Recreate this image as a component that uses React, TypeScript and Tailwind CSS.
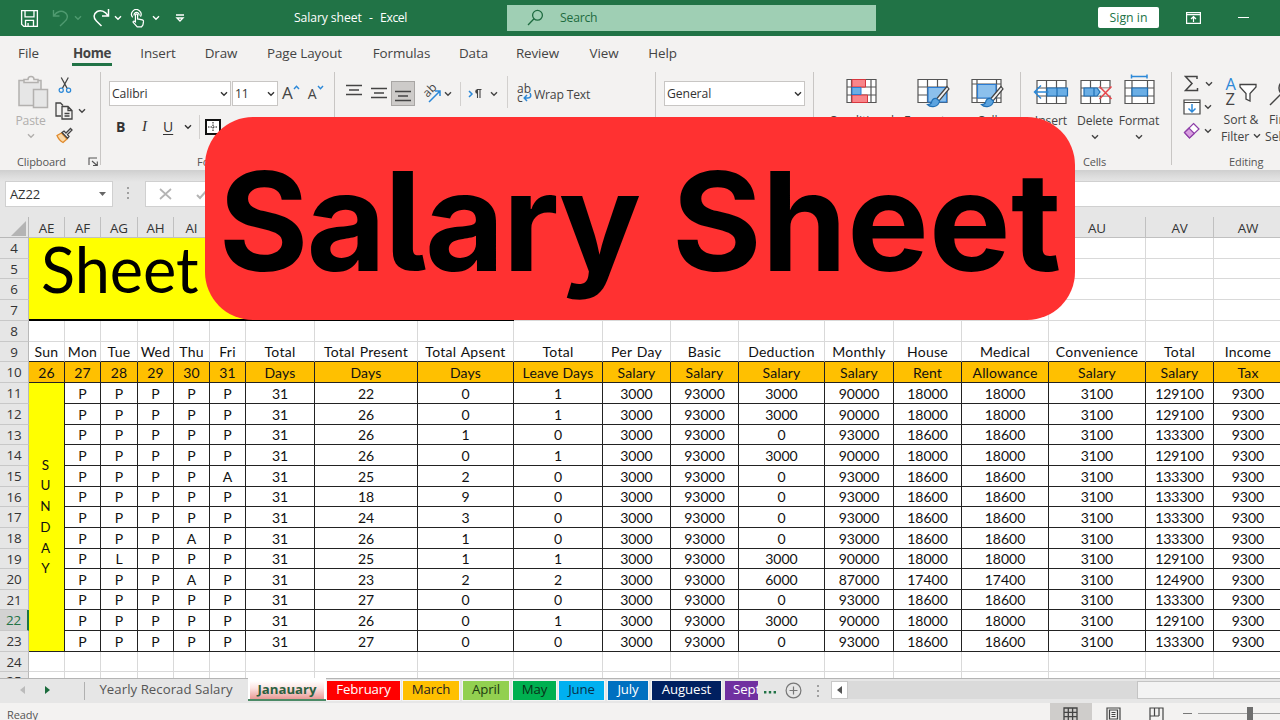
import type { ReactNode } from "react";

const ROW_H =
  "grid-rows-[21px_20px_21px_21px_21px_20px_21px_21px_21px_20px_21px_21px_20px_21px_21px_20px_21px_20px_21px_21px_20px_7px]";
const COLS =
  "grid-cols-[29px_36px_36px_37px_36px_36px_36px_69px_103px_96px_89px_68px_68px_86px_69px_68px_87px_97px_68px_69px]";

const LETTERS = ["AE", "AF", "AG", "AH", "AI", "AJ", "AK", "AL", "AM", "AN", "AO", "AP", "AQ", "AR", "AS", "AT", "AU", "AV", "AW"];
const HEAD1 = ["Sun", "Mon", "Tue", "Wed", "Thu", "Fri", "Total", "Total Present", "Total Apsent", "Total", "Per Day", "Basic", "Deduction", "Monthly", "House", "Medical", "Convenience", "Total", "Income"];
const HEAD2 = ["26", "27", "28", "29", "30", "31", "Days", "Days", "Days", "Leave Days", "Salary", "Salary", "Salary", "Salary", "Rent", "Allowance", "Salary", "Salary", "Tax"];

// attendance marks, present, absent, leave, deduction
const STAFF: [string, number, number, number, number][] = [
  ["PPPPP", 22, 0, 1, 3000],
  ["PPPPP", 26, 0, 1, 3000],
  ["PPPPP", 26, 1, 0, 0],
  ["PPPPP", 26, 0, 1, 3000],
  ["PPPPA", 25, 2, 0, 0],
  ["PPPPP", 18, 9, 0, 0],
  ["PPPPP", 24, 3, 0, 0],
  ["PPPAP", 26, 1, 0, 0],
  ["PLPPP", 25, 1, 1, 3000],
  ["PPPAP", 23, 2, 2, 6000],
  ["PPPPP", 27, 0, 0, 0],
  ["PPPPP", 26, 0, 1, 3000],
  ["PPPPP", 27, 0, 0, 0],
];

function staffCells([marks, present, absent, leave, deduction]: (typeof STAFF)[number]) {
  const monthly = 93000 - deduction;
  const allowance = monthly / 5;
  return [...marks.split(""), 31, present, absent, leave, 3000, 93000, deduction, monthly, allowance, allowance, 3100, monthly + allowance * 2 + 3100, 9300];
}

function Chevron({ className = "" }: { className?: string }) {
  return (
    <svg viewBox="0 0 8 6" className={`h-[6px] w-[8px] shrink-0 ${className}`} fill="none" stroke="currentColor" strokeWidth="1.4">
      <path d="M1 1.3 4 4.3 7 1.3" />
    </svg>
  );
}

function TitleBar() {
  return (
    <header className="flex h-9 items-center bg-[#217346] text-white">
      <svg className="mt-[2px] ml-[20px] h-[19px] w-[19px] shrink-0" viewBox="0 0 20 20" fill="none" stroke="#fff" strokeWidth="1.4">
        <path d="M1.7 1.7h16.6v16.6H4L1.7 16zM5.3 2v6.3h9.4V2M5.8 18v-6h8.4v6M8.5 18v-3.2" />
      </svg>
      <svg className="ml-[13px] h-[20px] w-[18px] shrink-0" viewBox="0 0 18 20" fill="none" stroke="#4f9a70" strokeWidth="1.4">
        <path d="M1.5 2v6h6M1.8 7.8C5 3 9.500 2.400 12.700 4.300c3.800 2.500 3.500 7-.5 9.700L8 18" />
      </svg>
      <Chevron className="ml-[4px] text-[#4f9a70]" />
      <svg className="ml-[10px] h-[20px] w-[18px] shrink-0" viewBox="0 0 18 20" fill="none" stroke="#fff" strokeWidth="1.5">
        <path d="M16.500 1v7h-6.500M16.200 7.800C13 3 8.500 1.600 5.200 3.500c-4 2.400-4 6.500-.8 9.500L9.500 18" />
      </svg>
      <Chevron className="ml-[4px]" />
      <svg className="mt-[2px] ml-[8px] h-[19px] w-[16px] shrink-0" viewBox="0 0 16 20" fill="none" stroke="#fff" strokeWidth="1.3">
        <path d="M2.400 8.800A5 5 0 1 1 10.600 8M4 6.800a2.600 2.600 0 1 1 5 0" />
        <path d="M5.300 13V6.300c0-1.500 2.300-1.500 2.300 0v4.200l5 1c1 .3 1.300.9 1.200 1.800l-.6 3.500-1.500 2H7.200L3 14.200c-.8-1.200.7-2.200 2.300-.7z" />
      </svg>
      <Chevron className="ml-[6px]" />
      <svg className="ml-[15px] h-[8px] w-[10px] shrink-0" viewBox="0 0 10 8" fill="none" stroke="#fff" strokeWidth="1.3">
        <path d="M1 1h8M2 4l3 3 3-3z" />
      </svg>
      <div className="ml-[109px] flex w-[113px] justify-between text-[12.2px] leading-none whitespace-nowrap">
        <span className="tracking-[-0.1px]">Salary sheet</span>
        <span>-</span>
        <span className="tracking-[-0.4px]">Excel</span>
      </div>
      <div className="ml-[100px] flex h-[26px] w-[369px] items-center bg-[#9fcfb4] text-[#1e6b40]">
        <svg className="ml-[20px] h-[17px] w-[17px]" viewBox="0 0 17 17" fill="none" stroke="currentColor" strokeWidth="1.3">
          <circle cx="10.500" cy="6.300" r="4.900" />
          <path d="M7 9.800 1 16" />
        </svg>
        <span className="ml-[16px] text-[12.2px] leading-none tracking-[-0.2px]">Search</span>
      </div>
      <div className="ml-[222px] flex h-[21px] w-[61px] items-center justify-center rounded-[2px] bg-white text-[12.3px] leading-none whitespace-nowrap text-[#217346]">
        Sign in
      </div>
      <svg className="ml-[27px] h-[12px] w-[15px]" viewBox="0 0 15 12" fill="none" stroke="#fff" strokeWidth="1.200">
        <path d="M.6.6h13.800v10.800H.6zM.6 2.600h13.800M7.500 10V4.800M5 7l2.500-2.500L10 7" />
      </svg>
      <div className="ml-[37px] h-px w-[11px] bg-white" />
    </header>
  );
}

function Tab({ className, children }: { className: string; children: ReactNode }) {
  return <span className={`flex shrink-0 justify-center whitespace-nowrap ${className}`}>{children}</span>;
}

function MenuTabs() {
  return (
    <nav className="flex h-9 items-start pt-[9px] text-[13.4px] leading-[17px] tracking-[-0.1px] text-[#444]">
      <Tab className="ml-[18px] w-[21px]">File</Tab>
      <Tab className="ml-[33px] h-[21px] w-[40px] border-b-[3px] border-[#217346] font-bold tracking-[-0.4px]">Home</Tab>
      <Tab className="ml-[29px] w-[34px]">Insert</Tab>
      <Tab className="ml-[30px] w-[32px]">Draw</Tab>
      <Tab className="ml-[30px] w-[75px]">Page Layout</Tab>
      <Tab className="ml-[31px] w-[57px]">Formulas</Tab>
      <Tab className="ml-[29px] w-[29px]">Data</Tab>
      <Tab className="ml-[28px] w-[43px]">Review</Tab>
      <Tab className="ml-[29px] w-[32px]">View</Tab>
      <Tab className="ml-[28px] w-[29px]">Help</Tab>
    </nav>
  );
}

function Group({ className, label, children }: { className: string; label?: string; children: ReactNode }) {
  return (
    <section className={`relative flex h-[98px] shrink-0 flex-col ${className}`}>
      <div className="h-[83px]">{children}</div>
      <div className="pr-[4px] text-center text-[11px] leading-[14px] tracking-[-0.2px] text-[#555]">{label}</div>
      <div className="absolute top-0 right-0 h-[93px] w-px bg-[#c8c6c4]" />
    </section>
  );
}

function ClipboardGroup() {
  return (
    <section className="relative flex h-[98px] w-[101px] shrink-0 flex-col">
      <div className="flex h-[83px]">
        <div className="ml-[12px] flex w-[37px] flex-col items-center pt-[3px] text-[#b1afad]">
          <svg className="ml-[5px] h-[34px] w-[32px] shrink-0" viewBox="0 0 32 34" fill="#e6e6e6" stroke="#b3b1af" strokeWidth="1.5">
            <path d="M2 5.500h22v25H2z" />
            <path d="M7 7.500h14V4.500h-4c0-4-6-4-6 0H7z" fill="#f3f2f1" />
            <path d="M16.500 14.500h14v18h-14z" />
          </svg>
          <span className="mt-[3px] text-[12.2px] leading-[17px] tracking-[-0.2px]">Paste</span>
          <Chevron className="mt-[4px]" />
        </div>
        <div className="ml-[6px] flex flex-col">
          <svg className="mt-[5px] ml-[3px] h-[17px] w-[14px]" viewBox="0 0 14 18" fill="none" strokeWidth="1.300">
            <path d="M3 .5 9.300 12M10.500.5 4.200 12" stroke="#444" />
            <circle cx="3" cy="14" r="2.200" stroke="#2b88d8" />
            <circle cx="10.800" cy="14" r="2.200" stroke="#2b88d8" />
          </svg>
          <div className="mt-[8px] flex items-center">
            <svg className="h-[18px] w-[18px]" viewBox="0 0 18 18" fill="none" stroke="#444" strokeWidth="1.300">
              <path d="M6 14H1V1h4.500L8 3.500" />
              <path d="M7 4.500h6l4 4V17H7zM13 4.500v4h4M9.500 11.500h5M9.500 14h5" />
            </svg>
            <Chevron className="ml-[5px] text-[#444]" />
          </div>
          <svg className="mt-[7px] ml-[1px] h-[17px] w-[17px]" viewBox="0 0 17 17" fill="none" strokeWidth="1.300">
            <path d="M5.500 6 11 12l-4 3.500C4 14 2 11 1 8.500z" fill="#fbd9a8" stroke="#e08a2c" />
            <path d="m6 5.500 2-1.500 2 2 4.500-4.500 1.500 1.500L11.500 7.500l1.500 2-1.500 1.800z" stroke="#444" />
          </svg>
        </div>
      </div>
      <div className="flex items-center text-[11px] leading-[14px] text-[#555]">
        <span className="ml-[17px] w-[49px] text-center tracking-[-0.1px]">Clipboard</span>
        <svg className="ml-[22px] h-[9px] w-[10px]" viewBox="0 0 10 9" fill="none" stroke="#555" strokeWidth="1.100">
          <path d="M1 8V1h8M4 4l5 4.500M9.300 4.500v4H5" />
        </svg>
      </div>
      <div className="absolute top-0 right-0 h-[93px] w-px bg-[#c8c6c4]" />
    </section>
  );
}

function Select({ className, children }: { className: string; children: ReactNode }) {
  return (
    <div className={`flex h-[25px] shrink-0 items-center justify-between border border-[#c8c6c4] bg-white pt-[2px] pr-[2px] pl-[2px] text-[12.2px] leading-none tracking-[-0.1px] text-[#333] ${className}`}>
      {children}
      <Chevron />
    </div>
  );
}

function FontGroup() {
  return (
    <Group className="w-[234px]">
      <div className="flex items-center pt-[9px] text-[#444]">
        <Select className="ml-[8px] w-[122px]">Calibri</Select>
        <Select className="ml-[1px] w-[46px]">11</Select>
        <span className="ml-[4px] text-[17px] leading-[22px]">A</span>
        <svg className="mb-[12px] h-[5px] w-[7px]" viewBox="0 0 7 5" fill="none" stroke="#2b88d8" strokeWidth="1.400">
          <path d="M1 4 3.500 1.200 6 4" />
        </svg>
        <span className="ml-[8px] pt-[1px] text-[14px] leading-[18px]">A</span>
        <svg className="mb-[12px] h-[5px] w-[7px]" viewBox="0 0 7 5" fill="none" stroke="#2b88d8" strokeWidth="1.400">
          <path d="M1 1 3.500 3.800 6 1" />
        </svg>
      </div>
      <div className="flex h-[42px] items-center text-[14px] leading-none text-[#333]">
        <span className="ml-[15px] w-[10px] font-bold">B</span>
        <span className="ml-[16px] w-[8px] font-['Liberation_Serif',serif] text-[15px] italic">I</span>
        <span className="ml-[13px] w-[11px] underline underline-offset-2">U</span>
        <Chevron className="ml-[10px]" />
        <div className="ml-[7px] h-[24px] w-px bg-[#d2d0ce]" />
        <svg className="ml-[5px] h-[16px] w-[16px]" viewBox="0 0 16 16" fill="#fff" stroke="#111">
          <path d="M1 1h14v14H1z" strokeWidth="2" />
          <path d="M8 3v10M3 8h10" strokeDasharray="1.500 1" />
        </svg>
      </div>
      <div className="mt-[7px] ml-[96px] text-[11px] leading-[14px] text-[#555]">Font</div>
    </Group>
  );
}

function AlignGroup() {
  return (
    <Group className="w-[321px]">
      <div className="flex h-[34px] items-center pt-[10px] text-[#444]">
        <svg className="mb-[7px] ml-[11px] h-[12px] w-[16px]" viewBox="0 0 16 12" stroke="#444" strokeWidth="1.300">
          <path d="M0 1.500h16M3 6h10M0 10.500h16" />
        </svg>
        <svg className="mb-[1px] ml-[9px] h-[12px] w-[16px]" viewBox="0 0 16 12" stroke="#444" strokeWidth="1.300">
          <path d="M0 1.500h16M3 6h10M0 10.500h16" />
        </svg>
        <div className="ml-[4px] flex h-[25px] w-[24px] items-end justify-center border border-[#a8a6a4] bg-[#cdcbc9] pb-[3px]">
          <svg className="h-[12px] w-[16px]" viewBox="0 0 16 12" stroke="#444" strokeWidth="1.300">
            <path d="M0 1.500h16M3 6h10M0 10.500h16" />
          </svg>
        </div>
        <svg className="ml-[8px] h-[18px] w-[18px] overflow-visible" viewBox="0 0 18 18" fill="none" strokeWidth="1.300">
          <text x="0" y="0" fill="#444" fontSize="12" transform="translate(4.500 13) rotate(-45)">ab</text>
          <path d="M6 17 16.500 6.500M12 6h5v5" stroke="#2b88d8" strokeWidth="1.500" />
        </svg>
        <Chevron className="ml-[3px]" />
        <div className="ml-[8px] h-[24px] w-px bg-[#d2d0ce]" />
        <svg className="ml-[7px] h-[12px] w-[14px]" viewBox="0 0 14 12" fill="none" strokeWidth="1.500">
          <path d="m1 3 3 3-3 3" stroke="#2b88d8" />
          <path d="M9.500 10V1.500M12 10V1.500M13.500 1.500H9" stroke="#444" strokeWidth="1.100" />
          <path d="M9.500 1.200a2.300 2.300 0 0 0 0 4.600z" fill="#444" />
        </svg>
        <Chevron className="ml-[8px]" />
        <div className="mt-[-4px] ml-[9px] h-[32px] w-px bg-[#d2d0ce]" />
        <div className="relative ml-[9px] h-[18px] w-[15px] text-[12px] leading-[9px]">
          <div className="-mt-px">ab</div>
          <div>c</div>
          <svg className="absolute right-0 bottom-[1px] h-[9px] w-[9px]" viewBox="0 0 9 9" fill="none" stroke="#2b88d8" strokeWidth="1.500">
            <path d="M7 0c1.500 3 .5 5-2 5H1.500M4 2 1.200 5 4 8" />
          </svg>
        </div>
        <span className="mt-[2px] ml-[2px] text-[12.2px] leading-none tracking-[-0.2px] whitespace-nowrap">Wrap Text</span>
      </div>
    </Group>
  );
}

function Brush() {
  return (
    <>
      <path d="M30 8.500 19.500 21l2.500 2L32 11z" fill="#f3f2f1" stroke="#444" strokeWidth="1.200" />
      <path d="M19.500 20.500c-3-.5-4.500 1-5 4-.4 1.500-2 2-4 2 3 3.500 11 3 12-3.500z" fill="#5ba3df" stroke="#1f6fb5" />
    </>
  );
}

const GRID_PATH = "M1 1.500h29v23H1zM1 9h29M1 17h29M10.500 1.500v23M20.500 1.500v23";

function StylesGroup() {
  return (
    <Group className="w-[207px]">
      <div className="flex pt-[6px]">
        <svg className="ml-[32px] h-[30px] w-[33px]" viewBox="0 0 33 30" fill="none" stroke="#555">
          <path d="M1 1.500h29v23H1zM1 9h29M1 17h29M5.500 1.500v23M25 1.500v23" fill="#fff" strokeWidth="1.200" />
          <path d="M6 1.500h13.500V9H6zM6 17h15.500v7.500H6z" fill="#f8858a" stroke="#d9363e" />
          <path d="M6 9.500h9v7H6z" fill="#6aaee5" stroke="#2b7cd3" />
        </svg>
        <svg className="ml-[38px] h-[30px] w-[33px]" viewBox="0 0 33 30" fill="none" stroke="#555" strokeWidth="1.200">
          <path d={GRID_PATH} fill="#fff" />
          <path d="M11 9.500h18.500V24H11z" fill="#8cc0ec" stroke="#2b7cd3" />
          <Brush />
        </svg>
        <svg className="ml-[21px] h-[30px] w-[33px]" viewBox="0 0 33 30" fill="none" stroke="#555" strokeWidth="1.200">
          <path d="M1 1.500h29v23H1zM1 6h29M1 20h29M6 1.500v23M25.500 1.500v23" fill="#fff" />
          <path d="M6.500 6.500h18.500v13.500H6.500z" fill="#8cc0ec" stroke="#2b7cd3" />
          <Brush />
        </svg>
      </div>
      <div className="mt-[4px] flex text-[12.2px] leading-[17px] whitespace-nowrap text-[#444]">
        <span className="ml-[15px] w-[75px]">Conditional</span>
        <span className="w-[73px]">Format as</span>
        <span>Cell</span>
      </div>
    </Group>
  );
}

function BigButton({ className, label, chevron, children }: { className: string; label: string; chevron?: boolean; children: ReactNode }) {
  return (
    <div className={`flex shrink-0 flex-col items-center text-[#444] ${className}`}>
      <svg className="h-[36px] w-[36px]" viewBox="0 0 36 36" fill="none" stroke="#555" strokeWidth="1.200">
        {children}
      </svg>
      <span className="mt-[2px] text-[12.2px] leading-[17px] tracking-[-0.1px] whitespace-nowrap">{label}</span>
      {chevron && <Chevron className="mt-[5px]" />}
    </div>
  );
}

function CellsGroup() {
  return (
    <Group className="w-[151px]" label="Cells">
      <div className="flex pt-[2px]">
        <BigButton className="ml-[8px] w-[44px]" label="Insert">
          <path d="M4 6.500h29v23H4zM4 14h29M4 22h29M13.500 6.500v23M23.500 6.500v23" fill="#fff" />
          <path d="M14 14h20.500v8H14zM24 14v8" fill="#6aaee5" stroke="#1f6fb5" />
          <path d="M1.500 18h14M8 11.500 1.500 18 8 24.500" stroke="#2b88d8" strokeWidth="1.500" />
        </BigButton>
        <BigButton className="w-[44px]" label="Delete" chevron>
          <path d="M4 6.500h29v23H4zM4 14h29M4 22h29M13.500 6.500v23M23.500 6.500v23" fill="#fff" />
          <path d="M20 14.500h14v7H20z" fill="#f3f2f1" stroke="none" />
          <path d="M7 14h13l3 4-3 4H7zM17 14v8" fill="#6aaee5" stroke="#1f6fb5" />
          <path d="m22.500 12.500 12 12.500M34.500 12.500 22.500 25" stroke="#e8474d" strokeWidth="1.600" />
        </BigButton>
        <BigButton className="w-[44px]" label="Format" chevron>
          <path d="M4 6.500h29v23H4zM4 14h29M4 22h29M11 6.500v23M26.500 6.500v23" fill="#fff" />
          <path d="M11 14h15.500v8H11z" fill="#6aaee5" stroke="#1f6fb5" />
          <path d="M10.500 2.500h15.500M10.500.5v4M26 .5v4" stroke="#2b88d8" strokeWidth="1.500" />
        </BigButton>
      </div>
    </Group>
  );
}

function EditingGroup() {
  return (
    <section className="flex h-[98px] w-[120px] shrink-0 flex-col">
      <div className="flex h-[83px] text-[#444]">
        <div className="ml-[11px] flex w-[33px] flex-col">
          <div className="flex h-[20px] items-end">
            <svg className="ml-[1px] h-[17px] w-[15px]" viewBox="0 0 15 17" fill="none" stroke="#444" strokeWidth="1.500">
              <path d="M13 4V1.500H1.500L8 8.500l-6.500 7h12V13" />
            </svg>
            <Chevron className="mb-[5px] ml-[6px]" />
          </div>
          <div className="mt-[7px] flex h-[16px] items-center">
            <svg className="h-[16px] w-[18px]" viewBox="0 0 18 16" fill="none" stroke="#444" strokeWidth="1.200">
              <path d="M1 1h16v14H1zM1 3.500h16" fill="#fff" />
              <path d="M9 5v8M5.500 9.500 9 13l3.500-3.500" stroke="#2b88d8" strokeWidth="1.500" />
            </svg>
            <Chevron className="ml-[3px]" />
          </div>
          <div className="mt-[7px] flex h-[18px] items-center">
            <svg className="h-[17px] w-[18px]" viewBox="0 0 18 17" fill="#fff" stroke="#8e3fa8" strokeWidth="1.200">
              <path d="M10.500 1.500 16 7l-9.500 9L1.500 10.500z" />
              <path d="m6 6.200 5.300 5.300-4.800 4.500-5-5.500z" fill="#d9a0e0" />
            </svg>
            <Chevron className="ml-[3px]" />
          </div>
        </div>
        <div className="ml-[8px] flex w-[41px] flex-col items-center pt-[4px] text-[12.2px] leading-[17px] tracking-[-0.1px]">
          <div className="flex h-[33px] w-[31px]">
            <div className="w-[12px] text-[16.5px] leading-[15px]">
              <div className="text-[#2b88d8]">A</div>
              <div>Z</div>
            </div>
            <svg className="mt-[7px] ml-[1px] h-[19px] w-[18px]" viewBox="0 0 18 19" fill="#fff" stroke="#444" strokeWidth="1.300">
              <path d="M1 1.500h16V4l-6 6.500V18l-4-2V10.500L1 4z" />
            </svg>
          </div>
          <span className="mt-[2px] whitespace-nowrap">Sort &amp;</span>
          <span className="flex items-center gap-[4px]">
            Filter <Chevron />
          </span>
        </div>
        <div className="ml-[6px] flex flex-col pt-[4px] text-[12.2px] leading-[17px] whitespace-nowrap">
          <svg className="h-[33px] w-[30px]" viewBox="0 0 30 33" fill="none" stroke="#444" strokeWidth="1.500">
            <path d="M3 29 14 18" />
            <circle cx="20" cy="12" r="8" />
          </svg>
          <span className="mt-[2px] ml-[2px]">Find &amp;</span>
          <span className="-ml-[2px]">Select</span>
        </div>
      </div>
      <div className="ml-[57px] text-[11px] leading-[14px] tracking-[-0.1px] text-[#555]">Editing</div>
    </section>
  );
}

function FormulaBar() {
  return (
    <div className="flex h-[47px] items-start bg-[linear-gradient(#cfcfcf_0,#dcdcdc_6px,#e6e6e6_12px)] pt-[11px]">
      <div className="ml-[5px] flex h-[26px] w-[108px] items-center justify-between border border-[#d0d0d0] bg-white pt-px pr-[6px] pl-[4px] text-[13px] leading-none tracking-[-0.1px] text-[#333]">
        AZ22
        <svg className="h-[4px] w-[7px]" viewBox="0 0 7 4" fill="#666">
          <path d="M0 0h7L3.500 4z" />
        </svg>
      </div>
      <svg className="mt-[6px] ml-[14px] h-[14px] w-[3px]" viewBox="0 0 3 14" fill="#a0a0a0">
        <path d="M0 0h2v2H0zM0 5h2v2H0zM0 10h2v2H0z" />
      </svg>
      <div className="ml-[15px] flex h-[26px] grow items-center border border-r-0 border-[#d0d0d0] bg-white">
        <svg className="ml-[13px] h-[12px] w-[13px]" viewBox="0 0 13 12" stroke="#b4b4b4" strokeWidth="1.700">
          <path d="m1 1 11 10M12 1 1 11" />
        </svg>
        <svg className="ml-[24px] h-[12px] w-[13px]" viewBox="0 0 13 12" fill="none" stroke="#b4b4b4" strokeWidth="2">
          <path d="m1 7 3 3 8-9" />
        </svg>
      </div>
    </div>
  );
}

function ColumnHeaders() {
  return (
    <div className={`grid h-[21px] w-[1283px] bg-[#e6e6e6] ${COLS}`}>
      <div className="flex items-end justify-end border-r border-b border-[#b8b8b8] pr-[2px] pb-[1px]">
        <svg className="h-[15px] w-[15px]" viewBox="0 0 15 15" fill="#b4b4b4">
          <path d="M15 0v15H0z" />
        </svg>
      </div>
      {LETTERS.map((l) => (
        <div key={l} className="flex items-center justify-center border-r border-b border-[#c0c0c0] pt-[3px] text-[13.4px] leading-none tracking-[-0.2px] text-[#333]">
          {l}
        </div>
      ))}
    </div>
  );
}

function RowHeader({ n }: { n: number }) {
  const tone = n === 22 ? "bg-[#d2d2d2] text-[#217346] border-r-2 border-r-[#217346]" : "text-[#333] bg-[#e6e6e6] border-r border-r-[#b8b8b8]";
  return (
    <div className={`col-start-1 flex items-center justify-center overflow-hidden border-b border-b-[#c8c8c8] pt-[2px] font-['Open_Sans',sans-serif] text-[13.4px] leading-none tracking-[-0.2px] ${tone}`}>
      {n}
    </div>
  );
}

function Plain({ count }: { count: number }) {
  return (
    <>
      {Array.from({ length: count }, (_, i) => (
        <div key={i} className="border-r border-b border-[#d9d9d9]" />
      ))}
    </>
  );
}

const CELL = "flex items-center justify-center overflow-hidden border-r border-b whitespace-nowrap leading-none pt-[2px]";

function Sheet() {
  return (
    <main className={`grid h-[441px] w-[1283px] overflow-hidden bg-white font-['Lato',sans-serif] text-[14px] text-[#111] [font-variant-ligatures:none] ${COLS} ${ROW_H}`}>
      <RowHeader n={4} />
      <div className="col-span-9 row-span-4 flex items-center border-b-2 border-black bg-[#ffff00] pb-[20px] pl-[12px] text-[63px] leading-none text-black">
        Sheet
      </div>
      <Plain count={10} />
      {[5, 6, 7].map((n) => (
        <div key={n} className="contents">
          <RowHeader n={n} />
          <Plain count={10} />
        </div>
      ))}
      <RowHeader n={8} />
      <Plain count={19} />
      <RowHeader n={9} />
      {HEAD1.map((h, i) => (
        <div key={i} className={`${CELL} border-r-[#d9d9d9] border-b-[#222] tracking-[0.25px] [word-spacing:1px]`}>
          {h}
        </div>
      ))}
      <RowHeader n={10} />
      {HEAD2.map((h, i) => (
        <div key={i} className={`${CELL} border-[#222] bg-[#ffc000] tracking-[0.15px]`}>
          {h}
        </div>
      ))}
      {STAFF.map((s, r) => (
        <div key={r} className="contents">
          <RowHeader n={11 + r} />
          {r === 0 && (
            <div className="row-span-13 flex flex-col items-center justify-center border-r border-b border-[#222] bg-[#ffff00] pr-[2px] text-[13.5px] leading-[20.7px]">
              {"SUNDAY".split("").map((c, i) => (
                <span key={i}>{c}</span>
              ))}
            </div>
          )}
          {staffCells(s).map((v, i) => (
            <div key={i} className={`${CELL} border-[#222]`}>
              {v}
            </div>
          ))}
        </div>
      ))}
      <RowHeader n={24} />
      <Plain count={19} />
      <div className="col-start-1 overflow-hidden border-r border-[#b8b8b8] bg-[#e6e6e6] text-center font-['Open_Sans',sans-serif] text-[13.4px] leading-[18px] text-[#333]">25</div>
      <Plain count={19} />
    </main>
  );
}

function SheetTab({ className, children }: { className: string; children: ReactNode }) {
  return (
    <div className={`mt-[2px] flex h-[19px] shrink-0 items-center justify-center overflow-hidden pb-px outline-1 outline-[#f4f4f4] whitespace-nowrap ${className}`}>
      {children}
    </div>
  );
}

function SheetTabs() {
  return (
    <div className="flex h-[25px] items-start border-t border-[#b4b4b4] bg-[#e6e6e6] text-[13.2px] leading-none tracking-[-0.1px]">
      <svg className="mt-[7px] ml-[20px] h-[8px] w-[5px]" viewBox="0 0 5 8" fill="#bbb">
        <path d="M5 0v8L0 4z" />
      </svg>
      <svg className="mt-[7px] ml-[20px] h-[8px] w-[5px]" viewBox="0 0 5 8" fill="#1a6b3c">
        <path d="M0 0v8l5-4z" />
      </svg>
      <div className="mt-[3px] ml-[34px] h-[18px] w-px bg-[#b0b0b0]" />
      <div className="ml-[14px] flex h-[22px] w-[134px] items-center justify-center tracking-[0.05px] whitespace-nowrap text-[#555]">Yearly Recorad Salary</div>
      <div className="-mt-px ml-[15px] h-[23px] w-[78px] shrink-0 border-b-2 border-[#4b8a66] bg-white px-[2px] pt-[3px]">
        <div className="flex h-[18px] items-center justify-center bg-[linear-gradient(#fff,#fbe3e1_40%,#e99a96)] font-bold tracking-[0px] text-[#2b6040]">Janauary</div>
      </div>
      <SheetTab className="ml-[1px] w-[73px] bg-[#ff0000] text-white">February</SheetTab>
      <SheetTab className="ml-[3px] w-[56px] bg-[#ffc000] text-[#222]">March</SheetTab>
      <SheetTab className="ml-[4px] w-[46px] bg-[#92d050] text-[#1c3a10]">April</SheetTab>
      <SheetTab className="ml-[4px] w-[43px] bg-[#00b050] text-[#0a3018]">May</SheetTab>
      <SheetTab className="ml-[3px] w-[45px] bg-[#00b0f0] text-[#08304a]">June</SheetTab>
      <SheetTab className="ml-[4px] w-[40px] bg-[#0070c0] text-white">July</SheetTab>
      <SheetTab className="ml-[4px] w-[69px] bg-[#002060] text-white">Auguest</SheetTab>
      <div className="mt-[2px] ml-[4px] flex h-[19px] w-[33px] shrink-0 items-center overflow-hidden bg-[#7030a0] pb-px pl-[8px] text-white">Sept</div>
      <svg className="mt-[12px] ml-[6px] h-[3px] w-[12px]" viewBox="0 0 12 3" fill="#217346">
        <path d="M0 0h2.400v2.400H0zM4.800 0h2.400v2.400H4.800zM9.600 0H12v2.400H9.600z" />
      </svg>
      <svg className="mt-[3px] ml-[9px] h-[17px] w-[17px]" viewBox="0 0 17 17" fill="none" stroke="#777" strokeWidth="1.200">
        <path d="M8.500 4.500v8M4.500 8.500h8" />
        <circle cx="8.500" cy="8.500" r="7.400" />
      </svg>
      <svg className="mt-[6px] ml-[15px] h-[12px] w-[2px]" viewBox="0 0 2 12" fill="#a0a0a0">
        <path d="M0 0h2v2H0zM0 5h2v2H0zM0 10h2v2H0z" />
      </svg>
      <div className="mt-[2px] ml-[12px] flex h-[18px] w-[17px] shrink-0 items-center justify-center border border-[#c8c8c8] bg-white">
        <svg className="h-[8px] w-[5px]" viewBox="0 0 5 8" fill="#555">
          <path d="M5 0v8L0 4z" />
        </svg>
      </div>
      <div className="mt-[2px] h-[18px] w-[289px] shrink-0 bg-[#dadada]" />
      <div className="mt-[2px] h-[18px] grow border border-r-0 border-[#c4c4c4] bg-[#f3f3f3]" />
    </div>
  );
}

function StatusBar() {
  return (
    <footer className="flex h-[17px] items-start overflow-hidden bg-[#f3f2f1] text-[11px] text-[#555]">
      <span className="mt-[5px] ml-[7px] w-[1043px] leading-[14px] tracking-[-0.1px]">Ready</span>
      <div className="flex h-[17px] w-[42px] shrink-0 justify-center bg-[#cfcdcb] pt-[4px] pr-[2px]">
        <svg className="h-[15px] w-[15px]" viewBox="0 0 15 15" fill="none" stroke="#444" strokeWidth="1.300">
          <path d="M1 1h13v13H1zM1 5.300h13M1 9.600h13M5.300 1v13M9.600 1v13" />
        </svg>
      </div>
      <svg className="mt-[4px] ml-[14px] h-[15px] w-[15px] shrink-0" viewBox="0 0 15 15" fill="none" stroke="#444" strokeWidth="1.200">
        <path d="M1 1h13v13H1zM3.500 3h8v9h-8zM5.500 5.500h4M5.500 7.500h4M5.500 9.500h4" />
      </svg>
      <svg className="mt-[4px] ml-[28px] h-[15px] w-[15px] shrink-0" viewBox="0 0 15 15" fill="none" stroke="#444" strokeWidth="1.200">
        <path d="M1 1h13v13H1zM5.500 1v8M10 1v8M1 9h9" />
      </svg>
      <div className="mt-[10px] ml-[19px] h-px w-[9px] shrink-0 bg-[#777]" />
      <div className="mt-[10px] ml-[6px] h-px w-[49px] shrink-0 bg-[#a0a0a0]" />
      <div className="mt-[4px] h-[13px] w-[6px] shrink-0 bg-[#6e6e6e]" />
      <div className="mt-[10px] h-px grow bg-[#a0a0a0]" />
    </footer>
  );
}

export default function App() {
  return (
    <div className="relative flex h-[720px] w-[1280px] flex-col overflow-hidden bg-[#f3f2f1] font-['Open_Sans',sans-serif]">
      <TitleBar />
      <MenuTabs />
      <div className="flex h-[98px] shrink-0 overflow-hidden">
        <ClipboardGroup />
        <FontGroup />
        <AlignGroup />
        <Group className="w-[158px]">
          <div className="pt-[9px] pl-[8px]">
            <Select className="w-[141px]">General</Select>
          </div>
        </Group>
        <StylesGroup />
        <CellsGroup />
        <EditingGroup />
      </div>
      <FormulaBar />
      <ColumnHeaders />
      <Sheet />
      <SheetTabs />
      <StatusBar />
      <div className="absolute top-[117px] left-[205px] flex h-[203px] w-[870px] items-center justify-center rounded-[48px] bg-[#ff3131] pt-[5px]">
        <h1 className="font-['Inter',sans-serif] text-[137px] leading-none font-[680] whitespace-nowrap text-black [font-feature-settings:'cv05']">
          <span className="tracking-[-1.8px]">Salary</span> <span className="tracking-[0.2px]">Sheet</span>
        </h1>
      </div>
    </div>
  );
}
